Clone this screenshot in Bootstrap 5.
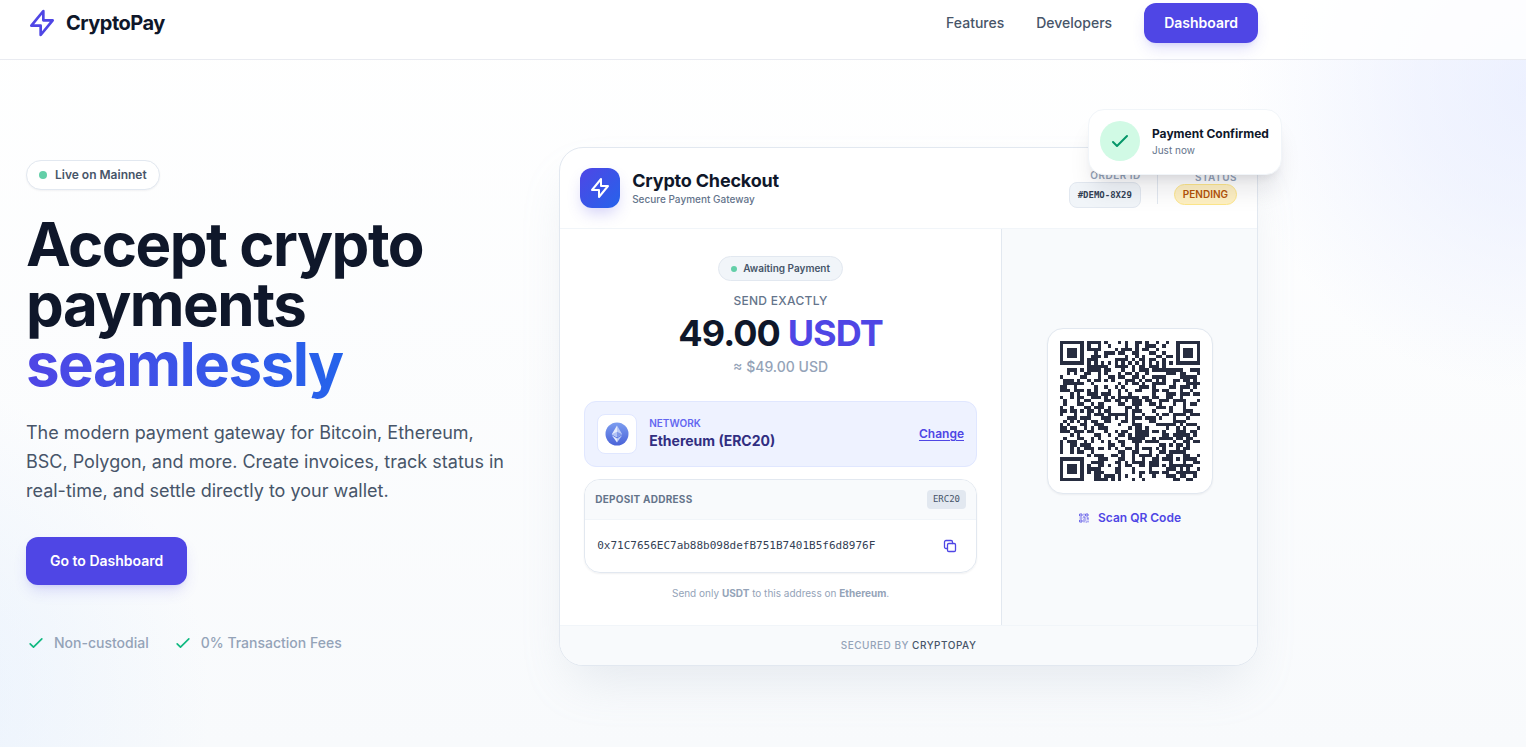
<!DOCTYPE html>
<html lang="en">
<head>
<meta charset="utf-8">
<meta name="viewport" content="width=device-width, initial-scale=1">
<title>CryptoPay</title>
<link href="https://cdn.jsdelivr.net/npm/bootstrap@5.3.0/dist/css/bootstrap.min.css" rel="stylesheet">
<style>
  :root { --ink: #0f172a; --slate-7: #334155; --slate-6: #475569; --slate-5: #64748b; --slate-4: #94a3b8; --line: #e2e8f0; --line-soft: #f1f5f9; --brand: #4f46e5; --blue: #2563eb; }
  body { font-family: Inter, sans-serif; font-size: 14px; line-height: 20px; color: var(--ink); min-height: 100vh; overflow-x: hidden;
    background: radial-gradient(circle 300px at calc(100% + 10px) 90px, rgba(224,231,255,.6) 0%, rgba(224,231,255,.42) 40%, rgba(224,231,255,0) 100%),
      radial-gradient(circle 320px at -110px 700px, rgba(219,234,254,.5) 0%, rgba(219,234,254,.36) 30%, rgba(219,234,254,0) 100%),
      linear-gradient(#fff, #f8fafc) no-repeat; }
  .shell { max-width: 1280px; padding: 0 24px; margin-left: 2px; }
  .topbar { background: rgba(255,255,255,.82); border-bottom: 1px solid #e9ebf1; padding: 3px 0 16px; }
  .brand { font-size: 20px; line-height: 28px; letter-spacing: -.025em; color: var(--ink); }
  .menu { gap: 32px; }
  .menu-link { color: var(--slate-6); font-weight: 500; text-decoration: none; }
  .btn-brand { --bs-btn-color: #fff; --bs-btn-hover-color: #fff; --bs-btn-bg: var(--brand); --bs-btn-hover-bg: #4338ca; --bs-btn-border-width: 0; --bs-btn-font-size: 14px; --bs-btn-line-height: 20px; --bs-btn-font-weight: 600; --bs-btn-border-radius: 12px; --bs-btn-padding-x: 20px; --bs-btn-padding-y: 10px; box-shadow: 0 8px 15px -3px rgba(79,70,229,.18), 0 4px 6px -4px rgba(79,70,229,.18); }
  .btn-hero { --bs-btn-padding-x: 24px; --bs-btn-padding-y: 14px; }
  .hero { padding-top: 87px; padding-bottom: 81px; }
  .hero-grid { display: grid; grid-template-columns: minmax(0,5fr) minmax(0,7fr); gap: 34px; align-items: center; }
  .live { border: 1px solid var(--line); background: #fff; border-radius: 99px; padding: 6px 12px; font-size: 12px; line-height: 16px; font-weight: 600; color: var(--slate-6); box-shadow: 0 1px 2px rgba(15,23,42,.05); }
  .dot { width: 8px; height: 8px; border-radius: 50%; background: #63cfa8; }
  .dot-sm { width: 6px; height: 6px; }
  h1 { font-size: 60px; line-height: 60px; font-weight: 700; letter-spacing: -.025em; margin: 24px 0; }
  h1 span { display: block; width: fit-content; }
  h1 .shade { background: linear-gradient(90deg, var(--brand), var(--blue)); -webkit-background-clip: text; background-clip: text; color: transparent; padding-bottom: 6px; margin-bottom: -6px; }
  .intro { font-size: 18px; line-height: 29px; color: var(--slate-6); margin: 0 0 32px; max-width: 480px; }
  .perks { margin: 48px 0 0; font-weight: 500; color: var(--slate-4); gap: 24px; }
  .perks svg { color: #10b981; }
  .gap-12 { gap: 12px; }
  .checkout { border: 1px solid var(--line); border-radius: 24px; background: #fff; overflow: hidden; box-shadow: 0 25px 50px -12px rgba(148,163,184,.2); }
  .pay-head { padding: 20px; height: 81px; border-bottom: 1px solid var(--line-soft); }
  .logo-tile { width: 40px; height: 40px; border-radius: 12px; color: #fff; background: linear-gradient(135deg, var(--brand), var(--blue)); box-shadow: 0 8px 15px -3px rgba(79,70,229,.25); }
  h2 { font-size: 18px; line-height: 22px; font-weight: 700; letter-spacing: -.01em; margin: 0; }
  .tiny { font-size: 10px; line-height: 15px; }
  .subtitle { color: var(--slate-5); font-weight: 500; }
  .caps { letter-spacing: .05em; text-transform: uppercase; }
  .caps-tight { letter-spacing: .025em; text-transform: uppercase; }
  .meta-label { font-weight: 600; color: var(--slate-4); line-height: 13px; }
  .mono { font-family: "DejaVu Sans Mono", monospace; }
  .order-no { font-size: 9px; line-height: 16px; font-weight: 700; color: var(--slate-7); background: var(--line-soft); border: 1px solid var(--line); border-radius: 8px; padding: 4px 8px; }
  .rule { width: 1px; height: 32px; background: var(--line); }
  .pending { color: #b45309; background: #fef0c3; border: 1px solid #fde68a; border-radius: 99px; padding: 2px 8px; font-weight: 600; }
  .pay-main { padding: 27px 24px 24px; border-right: 1px solid var(--line); }
  .waiting { border: 1px solid var(--line); background: var(--line-soft); border-radius: 99px; padding: 4px 12px; color: var(--slate-6); font-weight: 600; gap: 6px; }
  .send { font-size: 12px; line-height: 16px; font-weight: 500; color: var(--slate-5); margin-top: 12px; }
  .amount { font-size: 36px; line-height: 40px; font-weight: 700; letter-spacing: -.025em; margin-top: 4px; }
  .amount span { color: var(--brand); }
  .fiat { color: var(--slate-4); font-weight: 500; margin-top: 4px; }
  .network { border: 1px solid #e0e7ff; background: #eef2ff; border-radius: 12px; padding: 12px; margin-top: 24px; }
  .coin { width: 40px; height: 40px; border-radius: 8px; border: 1px solid #e0e7ff; background: #fff; }
  .net-label { color: #6366f1; font-weight: 600; }
  .net-name { line-height: 20px; font-weight: 700; color: #312e81; padding-bottom: 2px; }
  .change { font-size: 12px; line-height: 16px; font-weight: 600; color: var(--brand); text-underline-offset: 2px; }
  .deposit { border: 1px solid var(--line); border-radius: 16px; overflow: hidden; margin-top: 12px; box-shadow: 0 1px 2px rgba(15,23,42,.06); }
  .deposit-head { background: #f8fafc; border-bottom: 1px solid var(--line-soft); padding: 10px; color: var(--slate-5); }
  .chain { font-size: 9px; line-height: 15px; padding: 2px 6px; border-radius: 4px; background: var(--line); color: var(--slate-6); }
  .deposit-body { padding: 10px 10px 10px 12px; }
  .address { font-size: 11px; line-height: 16px; color: var(--slate-7); }
  .btn-copy { width: 32px; height: 32px; color: var(--brand); }
  .note { color: var(--slate-4); margin-top: 13px; }
  .pay-side { flex: 0 0 255px; background: #f8fafc; }
  .qr-box { border: 1px solid var(--line); border-radius: 16px; padding: 12px; background: #fff; box-shadow: 0 1px 2px rgba(15,23,42,.05); }
  .scan { font-size: 12px; line-height: 16px; font-weight: 600; color: var(--brand); margin-top: 16px; }
  .pay-foot { border-top: 1px solid var(--line-soft); background: #f8fafc; padding: 12px; font-weight: 500; color: var(--slate-4); }
  .pay-foot span { color: var(--slate-6); }
  .confirmed { position: absolute; top: -38px; right: -24px; width: 194px; padding: 11px 11px 13px; border: 1px solid var(--line-soft); border-radius: 16px; background: #fff; box-shadow: 0 20px 25px -5px rgba(15,23,42,.1), 0 8px 10px -6px rgba(15,23,42,.1); }
  .tick { width: 40px; height: 40px; border-radius: 50%; background: #d1fae5; color: #059669; }
  .confirmed strong { font-size: 12px; line-height: 18px; font-weight: 700; white-space: nowrap; }
  @media (max-width: 991px) { .hero-grid { grid-template-columns: minmax(0,1fr); } .shell { margin-left: 0; } }
</style>
</head>
<body>
<svg class="d-none">
  <symbol id="bolt" viewBox="0 0 24 24"><path d="M13 10V3L4 14h7v7l9-11h-7z" fill="none" stroke="currentColor" stroke-width="2" stroke-linecap="round" stroke-linejoin="round"/></symbol>
  <symbol id="check" viewBox="0 0 24 24"><path d="M5 13l4 4L19 7" fill="none" stroke="currentColor" stroke-width="2" stroke-linecap="round" stroke-linejoin="round"/></symbol>
</svg>

<header class="topbar">
  <nav class="shell d-flex align-items-center justify-content-between">
    <a href="#" class="brand fw-bold text-decoration-none d-flex align-items-center gap-2"><svg width="32" height="32" color="#4f46e5"><use href="#bolt"/></svg>CryptoPay</a>
    <div class="menu d-flex align-items-center">
      <a href="#" class="menu-link">Features</a>
      <a href="#" class="menu-link">Developers</a>
      <button type="button" class="btn btn-brand">Dashboard</button>
    </div>
  </nav>
</header>

<main class="shell hero">
  <div class="hero-grid">
    <section>
      <div class="live d-inline-flex align-items-center gap-2"><span class="dot"></span>Live on Mainnet</div>
      <h1><span>Accept crypto</span> <span>payments</span> <span class="shade">seamlessly</span></h1>
      <p class="intro">The modern payment gateway for Bitcoin, Ethereum, BSC, Polygon, and more. Create invoices, track status in real-time, and settle directly to your wallet.</p>
      <button type="button" class="btn btn-brand btn-hero">Go to Dashboard</button>
      <ul class="perks list-unstyled d-flex">
        <li class="d-flex gap-2"><svg width="20" height="20"><use href="#check"/></svg>Non-custodial</li>
        <li class="d-flex gap-2"><svg width="20" height="20"><use href="#check"/></svg>0% Transaction Fees</li>
      </ul>
    </section>

    <section class="position-relative">
      <div class="checkout">
        <div class="pay-head d-flex align-items-center justify-content-between">
          <div class="d-flex align-items-center gap-12">
            <div class="logo-tile d-flex align-items-center justify-content-center"><svg width="24" height="24"><use href="#bolt"/></svg></div>
            <div><h2>Crypto Checkout</h2><div class="tiny subtitle">Secure Payment Gateway</div></div>
          </div>
          <div class="d-flex align-items-center gap-3">
            <div class="d-flex flex-column align-items-end"><span class="tiny caps meta-label">Order ID</span><span class="order-no mono">#DEMO-8X29</span></div>
            <div class="rule"></div>
            <div class="d-flex flex-column align-items-end"><span class="tiny caps meta-label">Status</span><span class="pending tiny">PENDING</span></div>
          </div>
        </div>

        <div class="d-flex">
          <div class="pay-main flex-grow-1">
            <div class="text-center">
              <div class="d-flex justify-content-center"><div class="waiting tiny d-flex align-items-center"><span class="dot dot-sm"></span>Awaiting Payment</div></div>
              <div class="send caps-tight">Send exactly</div>
              <div class="amount">49.00 <span>USDT</span></div>
              <div class="fiat">≈ $49.00 USD</div>
            </div>
            <div class="network d-flex align-items-center gap-12">
              <div class="coin d-flex align-items-center justify-content-center">
                <svg width="24" height="24" viewBox="0 0 24 24">
                  <defs><linearGradient id="eth" x1="0" y1="0" x2="0" y2="1"><stop offset="0" stop-color="#7c9df0"/><stop offset="1" stop-color="#4a63d8"/></linearGradient></defs>
                  <circle cx="12" cy="12" r="11.5" fill="url(#eth)"/>
                  <path d="M12 3.500L6.800 12.200 12 15.200z" fill="#e6ecfc"/><path d="M12 3.500l5.200 8.700L12 15.200z" fill="#bccbf6"/>
                  <path d="M6.800 12.200L12 9.800v5.400z" fill="#b3c3f4"/><path d="M17.200 12.200L12 9.800v5.400z" fill="#8199ea"/>
                  <path d="M6.800 13.300L12 16.400V20.500z" fill="#e6ecfc"/><path d="M17.200 13.300L12 16.400V20.500z" fill="#bccbf6"/>
                </svg>
              </div>
              <div class="flex-grow-1"><div class="tiny net-label">NETWORK</div><div class="net-name">Ethereum (ERC20)</div></div>
              <a href="#" class="change">Change</a>
            </div>
            <div class="deposit">
              <div class="deposit-head d-flex align-items-center justify-content-between"><span class="tiny caps-tight fw-bold">Deposit address</span><span class="chain mono">ERC20</span></div>
              <div class="deposit-body d-flex align-items-center justify-content-between">
                <span class="address mono text-break">0x71C7656EC7ab88b098defB751B7401B5f6d8976F</span>
                <button type="button" class="btn btn-copy p-0 border-0 d-flex align-items-center justify-content-center" aria-label="Copy address">
                  <svg width="14" height="14" viewBox="0 0 14 14" fill="none" stroke="currentColor" stroke-width="1.300" stroke-linejoin="round" stroke-linecap="round"><rect x="4.500" y="4.500" width="8" height="8" rx="1.300"/><path d="M4.500 9.500H3a1.500 1.500 0 0 1-1.500-1.500V3A1.500 1.500 0 0 1 3 1.500h5A1.500 1.500 0 0 1 9.500 3v1.500"/></svg>
                </button>
              </div>
            </div>
            <div class="note tiny text-center">Send only <b>USDT</b> to this address on <b>Ethereum</b>.</div>
          </div>
          <div class="pay-side d-flex flex-column align-items-center justify-content-center">
            <div class="qr-box"><svg id="qr" class="d-block" width="140" height="140" viewBox="0 0 41 41" shape-rendering="crispEdges" role="img" aria-label="Payment QR code"><path fill="#272d40" d=""/></svg></div>
            <div class="scan d-flex align-items-center gap-2">
              <svg width="12" height="12" viewBox="0 0 24 24" fill="none" stroke="currentColor" stroke-width="2" stroke-linecap="round" stroke-linejoin="round" opacity=".85"><path d="M4 4h4v4H4zM16 4h4v4h-4zM4 16h4v4H4zM12 4v1M12 8v3M4 12h4M12 12h3M12 15v5M15 16h1M20 12v3M20 12h-2M16 20h1M20 18v2"/></svg>
              Scan QR Code
            </div>
          </div>
        </div>
        <div class="pay-foot tiny caps text-center">Secured by <span>CryptoPay</span></div>
      </div>

      <div class="confirmed d-flex align-items-center gap-12">
        <div class="tick d-flex align-items-center justify-content-center flex-shrink-0"><svg width="24" height="24"><use href="#check"/></svg></div>
        <div><strong class="d-block">Payment Confirmed</strong><span class="tiny d-block subtitle fw-normal">Just now</span></div>
      </div>
    </section>
  </div>
</main>

<script src="https://cdn.jsdelivr.net/npm/bootstrap@5.3.0/dist/js/bootstrap.bundle.min.js"></script>
<script>
// QR code, version 6, error correction H, mask 2: 4 blocks of 15 data and 28 correction bytes.
(function () {
  const text = 'crypto:0x71C7656EC7ab88b098defB751B7401B5f6d8976F';
  const N = 41, DATA = 60, BLOCKS = 4, ECC = 28;
  let bits = '0100' + text.length.toString(2).padStart(8, '0');
  for (const c of text) bits += c.charCodeAt(0).toString(2).padStart(8, '0');
  bits += '0000';
  const bytes = bits.match(/.{8}/g).map(b => parseInt(b, 2));
  for (let p = 0xec; bytes.length < DATA; p ^= 0xec ^ 0x11) bytes.push(p);
  const mul = (a, b) => { let r = 0; for (; b; b >>= 1) { if (b & 1) r ^= a; a <<= 1; if (a & 256) a ^= 0x11d; } return r; };
  const gen = new Array(ECC).fill(0); gen[ECC - 1] = 1;
  for (let i = 0, root = 1; i < ECC; i++, root = mul(root, 2))
    for (let j = 0; j < ECC; j++) gen[j] = mul(gen[j], root) ^ (j + 1 < ECC ? gen[j + 1] : 0);
  const blocks = [], codes = [];
  for (let b = 0; b < BLOCKS; b++) {
    const d = bytes.slice(b * 15, b * 15 + 15), rem = new Array(ECC).fill(0);
    for (const v of d) { const f = v ^ rem.shift(); rem.push(0); gen.forEach((g, i) => rem[i] ^= mul(g, f)); }
    blocks.push(d.concat(rem));
  }
  for (let i = 0; i < 15; i++) for (const b of blocks) codes.push(b[i]);
  for (let i = 15; i < 15 + ECC; i++) for (const b of blocks) codes.push(b[i]);
  const grid = Array.from({ length: N }, () => new Array(N).fill(null));
  const set = (r, c, v) => { if (r >= 0 && c >= 0 && r < N && c < N) grid[r][c] = v ? 1 : 0; };
  for (let i = 0; i < N; i++) { set(6, i, i % 2 === 0); set(i, 6, i % 2 === 0); }
  for (const [r, c] of [[3, 3], [3, N - 4], [N - 4, 3]])
    for (let y = -4; y <= 4; y++) for (let x = -4; x <= 4; x++) { const d = Math.max(Math.abs(x), Math.abs(y)); set(r + y, c + x, d !== 2 && d !== 4); }
  for (let y = -2; y <= 2; y++) for (let x = -2; x <= 2; x++) set(34 + y, 34 + x, Math.max(Math.abs(x), Math.abs(y)) !== 1);
  const fmt = '001110011100111'.split('').reverse().map(Number);
  for (let i = 0; i < 6; i++) set(i, 8, fmt[i]);
  set(7, 8, fmt[6]); set(8, 8, fmt[7]); set(8, 7, fmt[8]);
  for (let i = 9; i < 15; i++) set(8, 14 - i, fmt[i]);
  for (let i = 0; i < 8; i++) set(8, N - 1 - i, fmt[i]);
  for (let i = 8; i < 15; i++) set(N - 15 + i, 8, fmt[i]);
  set(N - 8, 8, 1);
  let k = 0;
  for (let right = N - 1, up = true; right >= 1; right -= 2, up = !up) {
    if (right === 6) right = 5;
    for (let v = 0; v < N; v++) for (let j = 0; j < 2; j++) {
      const c = right - j, r = up ? N - 1 - v : v;
      if (grid[r][c] !== null) continue;
      const bit = k < codes.length * 8 ? (codes[k >> 3] >> (7 - (k & 7))) & 1 : 0;
      k++;
      grid[r][c] = bit ^ (c % 3 === 0 ? 1 : 0);
    }
  }
  let d = '';
  grid.forEach((row, y) => row.forEach((v, x) => { if (v) d += `M${x} ${y}h1v1h-1z`; }));
  document.querySelector('#qr path').setAttribute('d', d);
})();
</script>
</body>
</html>
